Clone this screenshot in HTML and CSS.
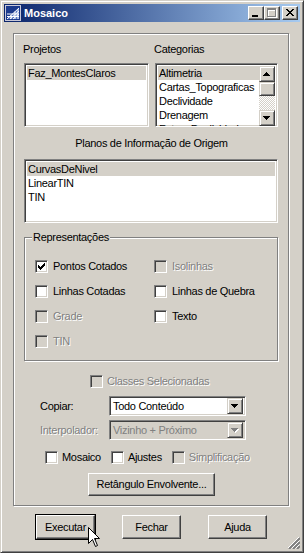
FILE: index.html
```html
<!DOCTYPE html>
<html lang="pt-BR">
<head>
    <meta charset="UTF-8">
    <title>Mosaico</title>
    <link rel="stylesheet" href="styles.css">
</head>
<body>
    <div class="window">
        <div class="titlebar">
            <svg class="app-icon" width="16" height="16" viewBox="0 0 16 16">
                <rect x="0.5" y="0.5" width="15" height="15" fill="#1c3a8c" stroke="#c8c8d8"/>
                <path d="M2 14 L14 3 L14 14 Z" fill="#5a78c0"/>
                <path d="M2 14 L14 3 M5 14 L14 6 M8 14 L14 9 M2 11.5 H14 M2 9 H14 M6 14 V10 M10 14 V6.5 M13 14 V4" stroke="#fff" stroke-width="1" fill="none"/>
            </svg>
            <span class="title-text">Mosaico</span>
            <button class="tb-btn">
                <svg width="16" height="14" viewBox="0 0 16 14"><path d="M4 9h6v2h-6z" fill="#000"/></svg>
            </button>
            <button class="tb-btn">
                <svg width="16" height="14" viewBox="0 0 16 14">
                    <path d="M4 3h9v2h-9z M4 3h1v9h-1z M12 3h1v9h-1z M4 11h9v1h-9z" fill="#fff"/>
                    <path d="M3 2h9v2h-9z M3 2h1v9h-1z M11 2h1v9h-1z M3 10h9v1h-9z" fill="#808080"/>
                </svg>
            </button>
            <button class="tb-btn close">
                <svg width="16" height="14" viewBox="0 0 16 14"><path d="M4 3h2v1h-2z M10 3h2v1h-2z M5 4h2v1h-2z M9 4h2v1h-2z M6 5h4v1h-4z M7 6h2v1h-2z M6 7h4v1h-4z M5 8h2v1h-2z M9 8h2v1h-2z M4 9h2v1h-2z M10 9h2v1h-2z" fill="#000"/></svg>
            </button>
        </div>

        <div class="client">
            <div class="frame">
                <div class="sources">
                    <div class="label">Projetos</div>
                    <div class="label">Categorias</div>
                    <div class="listbox">
                        <div class="item selected">Faz_MontesClaros</div>
                    </div>
                    <div class="listbox with-scroll">
                        <div class="items">
                            <div class="item selected">Altimetria</div>
                            <div class="item">Cartas_Topograficas</div>
                            <div class="item">Declividade</div>
                            <div class="item">Drenagem</div>
                            <div class="item">Fotos_Declividade</div>
                        </div>
                        <div class="scrollbar">
                            <div class="sb-btn">
                                <svg width="14" height="14" viewBox="0 0 14 14"><path d="M6 5h1v1h-1z M5 6h3v1h-3z M4 7h5v1h-5z M3 8h7v1h-7z" fill="#000"/></svg>
                            </div>
                            <div class="sb-thumb"></div>
                            <div class="sb-track"></div>
                            <div class="sb-btn">
                                <svg width="14" height="14" viewBox="0 0 14 14"><path d="M3 5h7v1h-7z M4 6h5v1h-5z M5 7h3v1h-3z M6 8h1v1h-1z" fill="#000"/></svg>
                            </div>
                        </div>
                    </div>
                </div>

                <div class="caption">Planos de Informação de Origem</div>
                <div class="listbox planos">
                    <div class="item selected">CurvasDeNivel</div>
                    <div class="item">LinearTIN</div>
                    <div class="item">TIN</div>
                </div>

                <fieldset class="group">
                    <legend>Representações</legend>
                    <div class="check-grid">
                        <label class="check"><span class="box"><svg width="7" height="7" viewBox="0 0 7 7"><path d="M6 0h1v1h-1z M5 1h2v1h-2z M0 2h1v1h-1z M4 2h3v1h-3z M0 3h2v1h-2z M3 3h3v1h-3z M0 4h5v1h-5z M1 5h3v1h-3z M2 6h1v1h-1z" fill="#000"/></svg></span>Pontos Cotados</label>
                        <label class="check disabled"><span class="box"></span>Isolinhas</label>
                        <label class="check"><span class="box"></span>Linhas Cotadas</label>
                        <label class="check"><span class="box"></span>Linhas de Quebra</label>
                        <label class="check disabled"><span class="box"></span>Grade</label>
                        <label class="check"><span class="box"></span>Texto</label>
                        <label class="check disabled"><span class="box"></span>TIN</label>
                    </div>
                </fieldset>

                <div class="classes">
                    <label class="check disabled"><span class="box"></span>Classes Selecionadas</label>
                </div>

                <div class="fields">
                    <span class="field-label">Copiar:</span>
                    <div class="combo">
                        <span class="combo-text">Todo Conteúdo</span>
                        <span class="combo-btn">
                            <svg width="14" height="14" viewBox="0 0 14 14"><path d="M3 5h7v1h-7z M4 6h5v1h-5z M5 7h3v1h-3z M6 8h1v1h-1z" fill="#000"/></svg>
                        </span>
                    </div>
                    <span class="field-label disabled">Interpolador:</span>
                    <div class="combo disabled">
                        <span class="combo-text">Vizinho + Próximo</span>
                        <span class="combo-btn">
                            <svg width="14" height="14" viewBox="0 0 14 14">
                                <path d="M4 6h7v1h-7z M5 7h5v1h-5z M6 8h3v1h-3z M7 9h1v1h-1z" fill="#fff"/>
                                <path d="M3 5h7v1h-7z M4 6h5v1h-5z M5 7h3v1h-3z M6 8h1v1h-1z" fill="#808080"/>
                            </svg>
                        </span>
                    </div>
                </div>

                <div class="options">
                    <label class="check"><span class="box"></span>Mosaico</label>
                    <label class="check"><span class="box"></span>Ajustes</label>
                    <label class="check disabled"><span class="box"></span>Simplificação</label>
                </div>

                <div class="center">
                    <button class="btn wide">Retângulo Envolvente...</button>
                </div>
            </div>

            <div class="actions">
                <button class="btn default">Executar</button>
                <button class="btn">Fechar</button>
                <button class="btn">Ajuda</button>
            </div>
        </div>

        <svg class="grip" width="12" height="12" viewBox="0 0 12 12">
            <path d="M12 1 L1 12 M12 5 L5 12 M12 9 L9 12" stroke="#808080" stroke-width="2"/>
            <path d="M11.5 -0.5 L-0.5 11.5 M11.5 3.5 L3.5 11.5 M11.5 7.5 L7.5 11.5" stroke="#fff" stroke-width="1"/>
        </svg>

        <svg class="cursor" width="13" height="21" viewBox="0 0 13 21">
            <path d="M0.5 0.5 V16.5 L4.5 12.5 L7.5 19.5 L9.5 18.5 L6.5 11.5 H11.5 Z" fill="#fff" stroke="#000" stroke-width="1" stroke-linejoin="miter"/>
        </svg>
    </div>
</body>
</html>
```

FILE: styles.css
```css
* {
    box-sizing: border-box;
}
body {
    margin: 0;
    font-family: "Liberation Sans", Arial, sans-serif;
    font-size: 11px;
    line-height: 13px;
    letter-spacing: -0.3px;
    color: #000;
    background: #d4d0c8;
}
.window {
    position: relative;
    width: 304px;
    height: 553px;
    padding: 3px;
    border: 1px solid;
    border-color: #d4d0c8 #404040 #404040 #d4d0c8;
    box-shadow: inset 1px 1px 0 #fff, inset -1px -1px 0 #808080;
    background: #d4d0c8;
    display: flex;
    flex-direction: column;
}
.titlebar {
    height: 18px;
    display: flex;
    align-items: center;
    padding: 0 2px 0 1px;
    background: linear-gradient(to right, #0a246a, #a6caf0);
    color: #fff;
    font-weight: bold;
    letter-spacing: 0;
}
.app-icon {
    margin-right: 3px;
}
.title-text {
    flex: 1;
}
.tb-btn {
    width: 16px;
    height: 14px;
    padding: 0;
    border: 1px solid;
    border-color: #fff #404040 #404040 #fff;
    box-shadow: inset -1px -1px 0 #808080;
    background: #d4d0c8;
    display: block;
}
.tb-btn svg {
    display: block;
    margin: -1px;
}
.tb-btn.close {
    margin-left: 2px;
}

.client {
    flex: 1;
    padding: 11px 0 0 9px;
}
.frame {
    width: 276px;
    border: 1px solid #808080;
    box-shadow: 1px 1px 0 #fff, inset 1px 1px 0 #fff;
    padding: 9px 9px 9px 10px;
}
.sources {
    display: grid;
    grid-template-columns: 125px 123px;
    column-gap: 6px;
    row-gap: 7px;
}
.label {
    margin-left: -1px;
}
.listbox {
    height: 64px;
    background: #fff;
    border: 1px solid;
    border-color: #808080 #fff #fff #808080;
    box-shadow: inset 1px 1px 0 #404040, inset -1px -1px 0 #d4d0c8;
    padding: 2px;
    overflow: hidden;
}
.item {
    height: 14px;
    line-height: 14px;
    padding-left: 1px;
    white-space: nowrap;
}
.item.selected {
    background: #d4d0c8;
}
.with-scroll {
    display: grid;
    grid-template-columns: 1fr 16px;
}
.items {
    overflow: hidden;
}
.scrollbar {
    display: flex;
    flex-direction: column;
    height: 60px;
}
.sb-btn, .sb-thumb, .combo-btn {
    border: 1px solid;
    border-color: #d4d0c8 #404040 #404040 #d4d0c8;
    box-shadow: inset 1px 1px 0 #fff, inset -1px -1px 0 #808080;
    background: #d4d0c8;
}
.sb-btn {
    height: 16px;
}
.sb-btn svg, .combo-btn svg {
    display: block;
}
.sb-thumb {
    height: 14px;
}
.sb-track {
    flex: 1;
    background-image: conic-gradient(#fff 25%, #d4d0c8 0 50%, #fff 0 75%, #d4d0c8 0);
    background-size: 2px 2px;
}

.caption {
    text-align: center;
    margin: 10px 0 9px;
}
.planos {
    width: 254px;
}

.group {
    margin: 8px 0 0;
    width: 254px;
    border: 1px solid #808080;
    box-shadow: 1px 1px 0 #fff, inset 1px 1px 0 #fff;
    padding: 10px 0 6px 10px;
}
.group legend {
    padding: 0 1px;
    margin-left: -3px;
    background: #d4d0c8;
    line-height: 13px;
}
.check-grid {
    display: grid;
    grid-template-columns: 119px auto;
    grid-auto-rows: 25px;
}
.check {
    display: flex;
    align-items: center;
    gap: 5px;
    white-space: nowrap;
}
.box {
    width: 13px;
    height: 13px;
    flex: none;
    background: #fff;
    border: 1px solid;
    border-color: #808080 #fff #fff #808080;
    box-shadow: inset 1px 1px 0 #404040, inset -1px -1px 0 #d4d0c8;
    padding: 2px;
}
.box svg {
    display: block;
}
.disabled {
    color: #808080;
    text-shadow: 1px 1px 0 #fff;
}
.disabled .box {
    background: #d4d0c8;
}

.classes {
    margin-top: 14px;
    padding-left: 66px;
    height: 13px;
    display: flex;
}
.classes .check {
    gap: 4px;
}
.fields {
    margin-top: 8px;
    padding-left: 16px;
    display: grid;
    grid-template-columns: 69px 137px;
    grid-auto-rows: 20px;
    row-gap: 4px;
    align-items: center;
}
.combo {
    height: 20px;
    display: flex;
    align-items: center;
    background: #fff;
    border: 1px solid;
    border-color: #808080 #fff #fff #808080;
    box-shadow: inset 1px 1px 0 #404040, inset -1px -1px 0 #d4d0c8;
    padding: 2px;
}
.combo.disabled {
    background: #d4d0c8;
    text-shadow: none;
}
.combo-text {
    flex: 1;
    padding-left: 1px;
    white-space: nowrap;
}
.combo-btn {
    width: 16px;
    height: 16px;
}
.combo-btn svg {
    margin: 0;
}

.options {
    margin-top: 11px;
    padding-left: 21px;
    display: flex;
    gap: 10px;
    height: 13px;
}
.options .check {
    gap: 4px;
}
.center {
    display: flex;
    justify-content: center;
    margin-top: 9px;
}
.btn {
    font: inherit;
    letter-spacing: inherit;
    color: #000;
    height: 23px;
    padding: 0;
    border: 1px solid;
    border-color: #fff #404040 #404040 #fff;
    box-shadow: inset -1px -1px 0 #808080;
    background: #d4d0c8;
}
.btn.wide {
    width: 127px;
}
.actions {
    display: flex;
    gap: 27px;
    margin-top: 9px;
    padding-left: 23px;
}
.actions .btn {
    width: 59px;
    height: 24px;
}
.btn.default {
    outline: 1px solid #000;
}
.grip {
    position: absolute;
    right: 3px;
    bottom: 3px;
}
.cursor {
    position: absolute;
    left: 87px;
    top: 526px;
}
```
